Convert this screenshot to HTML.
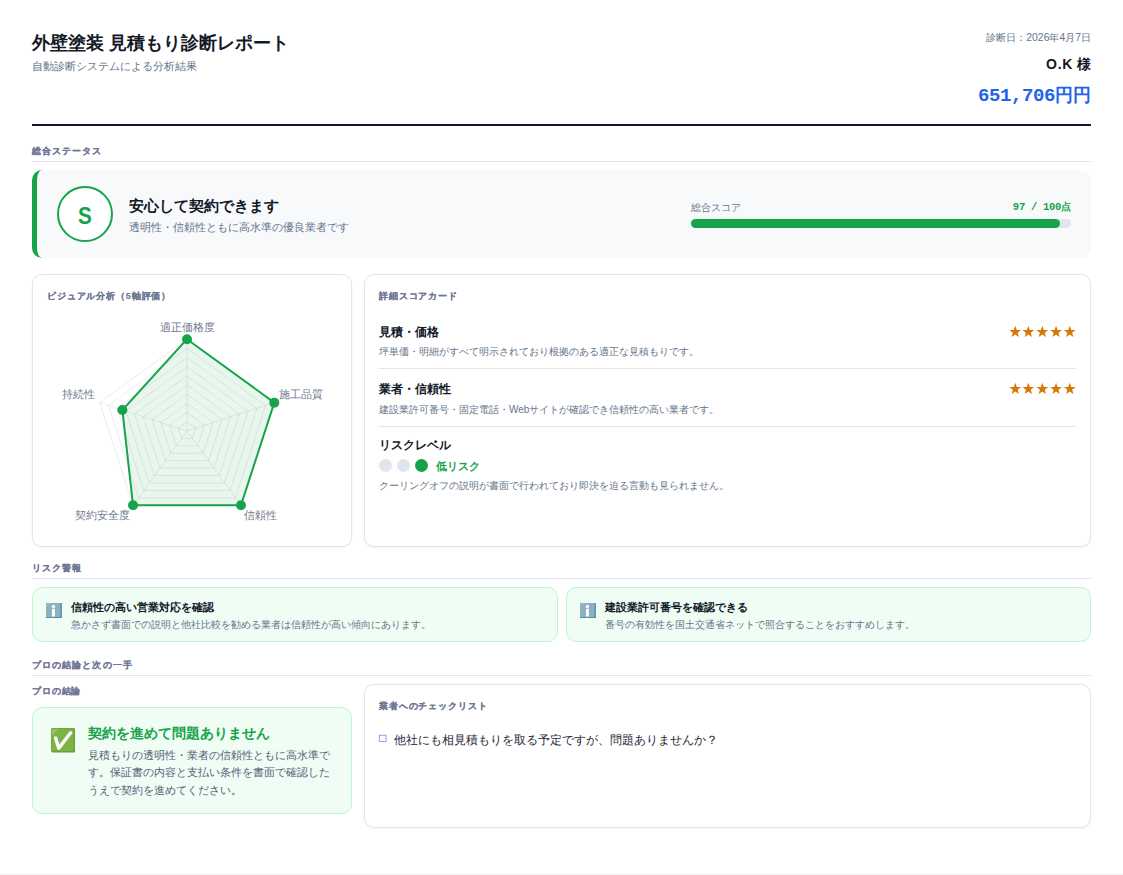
<!DOCTYPE html>
<html lang="ja">
<head>
<meta charset="utf-8">
<title>外壁塗装 見積もり診断レポート</title>
<style>
*{box-sizing:border-box;margin:0;padding:0}
html,body{width:1123px;height:875px;overflow:hidden}
body{font-family:"Liberation Sans",sans-serif;background:#f2f4f7;color:#111827;line-height:1.6;position:relative}
.mono{font-family:"Liberation Mono",monospace}
.page{position:absolute;left:0;top:0;width:1123px;height:873.5px;background:#fff}
.abs{position:absolute;white-space:nowrap}

/* header */
.h1{left:32px;top:29px;font-size:18px;font-weight:700;line-height:29px;color:#111827}
.h-sub{left:32px;top:57px;font-size:11px;line-height:18px;color:#64748b}
.h-date{right:32px;top:30px;font-size:10.4px;line-height:16px;color:#64748b}
.h-name{right:32px;top:53px;font-size:14px;font-weight:700;line-height:22px;color:#111827}
.h-price{right:32px;top:81.7px;font-size:18px;font-weight:700;line-height:29px;color:#2563eb}
.h-price span{font-size:19px;letter-spacing:-.4px}
.h-name span{letter-spacing:.7px}
.h-rule{left:32px;top:124px;width:1059px;height:2px;background:#111827}

/* section titles */
.sec{left:32px;width:1059px;height:18px;font-size:9px;font-weight:700;letter-spacing:.12em;line-height:14px;color:#6f7794;-webkit-text-stroke:.12px #6f7794;border-bottom:1px solid #e2e5ee}
.ctitle{font-size:9px;font-weight:700;letter-spacing:.095em;line-height:14px;color:#6f7794;-webkit-text-stroke:.12px #6f7794}

/* status */
.status{left:32px;top:170px;width:1059px;height:88px;background:#f8f9fb;border-left:5px solid #16a34a;border-radius:10px}
.grade{left:57px;top:186px;width:56px;height:56px;border:2px solid #16a34a;border-radius:50%;background:#fff;color:#16a34a;font-size:24px;font-weight:700;line-height:52px;text-align:center}
.grade span{display:inline-block;transform:translateY(2px) scaleX(.86)}
.st-h{left:129px;top:194px;font-size:15px;font-weight:700;line-height:24px;color:#111827}
.st-s{left:129px;top:217.5px;font-size:11px;line-height:18px;color:#64748b}
.sc-l{left:691px;top:200px;font-size:10px;line-height:16px;color:#64748b}
.sc-v{right:52px;top:199.2px;font-size:10px;font-weight:700;line-height:16px;color:#16a34a}
.bar{left:691px;top:219px;width:380px;height:9px;border-radius:4.5px;background:#e2e5ee}
.bar i{display:block;width:97%;height:100%;border-radius:4.5px;background:#16a34a}

/* cards */
.card{position:absolute;background:#fff;border:1px solid #e2e5ee;border-radius:10px;box-shadow:0 1px 3px rgba(15,23,42,.05)}
.c1{left:32px;top:274px;width:320px;height:273px}
.c2{left:364px;top:274px;width:727px;height:273px}
.row-t{left:379px;font-size:12px;font-weight:700;line-height:20px;color:#111827}
.row-d{left:379px;font-size:10px;line-height:16px;color:#64748b}
.div{left:379px;width:697px;height:1px;background:#e2e5ee}
.dot{width:13px;height:13px;border-radius:50%;background:#e2e5ee}
.dot.on{background:#16a34a}
.risk{left:436px;top:457px;font-size:11px;font-weight:700;line-height:18px;color:#16a34a}

/* alerts */
.alert{position:absolute;top:587.2px;width:525.5px;height:54.7px;background:#f0fdf4;border:1px solid #bbf7d0;border-radius:10px}
.a-t{font-size:11px;font-weight:700;line-height:18px;color:#111827}
.a-d{font-size:10px;line-height:16px;color:#64748b}

/* conclusion */
.concl{position:absolute;left:32px;top:707px;width:320px;height:107px;background:#f0fdf4;border:1px solid #bbf7d0;border-radius:10px}
.cc-h{left:88px;top:721.5px;font-size:14px;font-weight:700;line-height:22.4px;color:#16a34a}
.cc-b{left:88px;top:746.5px;font-size:11px;line-height:17.6px;color:#526077}
.c3{left:364px;top:684px;width:727px;height:144px}
.chk{left:394px;top:730.6px;font-size:12px;line-height:19.2px;color:#1f2937}
</style>
</head>
<body>
<div class="page">

<div class="abs h1">外壁塗装 見積もり診断レポート</div>
<div class="abs h-sub">自動診断システムによる分析結果</div>
<div class="abs h-date">診断日：2026年4月7日</div>
<div class="abs h-name"><span>O.K</span> 様</div>
<div class="abs h-price mono"><span>651,706</span>円円</div>
<div class="abs h-rule"></div>

<div class="abs sec" style="top:144px">総合ステータス</div>
<div class="abs status"></div>
<div class="abs grade"><span>S</span></div>
<div class="abs st-h">安心して契約できます</div>
<div class="abs st-s">透明性・信頼性ともに高水準の優良業者です</div>
<div class="abs sc-l">総合スコア</div>
<div class="abs sc-v mono"><span style="font-size:10.6px;letter-spacing:-.34px">97 / 100</span>点</div>
<div class="abs bar"><i></i></div>

<div class="card c1"></div>
<div class="abs ctitle" style="left:47px;top:289px">ビジュアル分析（5軸評価）</div>
<svg class="abs" style="left:32px;top:274px" width="320" height="273" viewBox="32 274 320 273">
  <g id="radar">
  <polygon points="187.00,421.82 195.73,428.16 192.40,438.43 181.60,438.43 178.27,428.16" fill="none" stroke="#000" stroke-opacity=".075" stroke-width="1"/>
  <polygon points="187.00,412.64 204.46,425.33 197.79,445.85 176.21,445.85 169.54,425.33" fill="none" stroke="#000" stroke-opacity=".075" stroke-width="1"/>
  <polygon points="187.00,403.46 213.19,422.49 203.19,453.28 170.81,453.28 160.81,422.49" fill="none" stroke="#000" stroke-opacity=".075" stroke-width="1"/>
  <polygon points="187.00,394.28 221.92,419.65 208.58,460.71 165.42,460.71 152.08,419.65" fill="none" stroke="#000" stroke-opacity=".075" stroke-width="1"/>
  <polygon points="187.00,385.10 230.65,416.82 213.98,468.13 160.02,468.13 143.35,416.82" fill="none" stroke="#000" stroke-opacity=".075" stroke-width="1"/>
  <polygon points="187.00,375.92 239.38,413.98 219.38,475.56 154.62,475.56 134.62,413.98" fill="none" stroke="#000" stroke-opacity=".075" stroke-width="1"/>
  <polygon points="187.00,366.74 248.11,411.14 224.77,482.99 149.23,482.99 125.89,411.14" fill="none" stroke="#000" stroke-opacity=".075" stroke-width="1"/>
  <polygon points="187.00,357.56 256.85,408.31 230.17,490.41 143.83,490.41 117.15,408.31" fill="none" stroke="#000" stroke-opacity=".075" stroke-width="1"/>
  <polygon points="187.00,348.38 265.58,405.47 235.56,497.84 138.44,497.84 108.42,405.47" fill="none" stroke="#000" stroke-opacity=".075" stroke-width="1"/>
  <polygon points="187.00,339.20 274.31,402.63 240.96,505.27 133.04,505.27 99.69,402.63" fill="none" stroke="#000" stroke-opacity=".075" stroke-width="1"/>
  <line x1="187.00" y1="431.00" x2="187.00" y2="339.20" stroke="#000" stroke-opacity=".075" stroke-width="1"/>
  <line x1="187.00" y1="431.00" x2="274.31" y2="402.63" stroke="#000" stroke-opacity=".075" stroke-width="1"/>
  <line x1="187.00" y1="431.00" x2="240.96" y2="505.27" stroke="#000" stroke-opacity=".075" stroke-width="1"/>
  <line x1="187.00" y1="431.00" x2="133.04" y2="505.27" stroke="#000" stroke-opacity=".075" stroke-width="1"/>
  <line x1="187.00" y1="431.00" x2="99.69" y2="402.63" stroke="#000" stroke-opacity=".075" stroke-width="1"/>
  <polygon points="187.00,339.20 274.31,402.63 240.96,505.27 133.04,505.27 122.39,410.01" fill="#16a34a" fill-opacity=".095" stroke="#16a34a" stroke-width="2" stroke-linejoin="miter"/>
  <circle cx="187.00" cy="339.20" r="5" fill="#16a34a"/>
  <circle cx="274.31" cy="402.63" r="5" fill="#16a34a"/>
  <circle cx="240.96" cy="505.27" r="5" fill="#16a34a"/>
  <circle cx="133.04" cy="505.27" r="5" fill="#16a34a"/>
  <circle cx="122.39" cy="410.01" r="5" fill="#16a34a"/>
  <text x="187.2" y="327.2" text-anchor="middle" dominant-baseline="central" font-size="11" fill="#6f788c">適正価格度</text>
  <text x="279.0" y="393.5" text-anchor="start" dominant-baseline="central" font-size="11" fill="#6f788c">施工品質</text>
  <text x="244.2" y="514.6" text-anchor="start" dominant-baseline="central" font-size="11" fill="#6f788c">信頼性</text>
  <text x="129.9" y="514.6" text-anchor="end" dominant-baseline="central" font-size="11" fill="#6f788c">契約安全度</text>
  <text x="95.1" y="393.5" text-anchor="end" dominant-baseline="central" font-size="11" fill="#6f788c">持続性</text>
  </g>
</svg>

<div class="card c2"></div>
<div class="abs ctitle" style="left:379px;top:289px">詳細スコアカード</div>
<div class="abs row-t" style="top:322px">見積・価格</div>
<svg class="abs" style="left:1005px;top:323.9px" width="75" height="16" viewBox="0 0 75 16" fill="#d97706"><polygon points="10.25,1.80 11.74,5.94 16.15,6.08 12.67,8.79 13.89,13.02 10.25,10.54 6.61,13.02 7.83,8.79 4.35,6.08 8.76,5.94"/><polygon points="23.35,1.80 24.84,5.94 29.25,6.08 25.77,8.79 26.99,13.02 23.35,10.54 19.71,13.02 20.93,8.79 17.45,6.08 21.86,5.94"/><polygon points="37.35,1.80 38.84,5.94 43.25,6.08 39.77,8.79 40.99,13.02 37.35,10.54 33.71,13.02 34.93,8.79 31.45,6.08 35.86,5.94"/><polygon points="51.05,1.80 52.54,5.94 56.95,6.08 53.47,8.79 54.69,13.02 51.05,10.54 47.41,13.02 48.63,8.79 45.15,6.08 49.56,5.94"/><polygon points="64.75,1.80 66.24,5.94 70.65,6.08 67.17,8.79 68.39,13.02 64.75,10.54 61.11,13.02 62.33,8.79 58.85,6.08 63.26,5.94"/></svg>
<div class="abs row-d" style="top:344px">坪単価・明細がすべて明示されており根拠のある適正な見積もりです。</div>
<div class="abs div" style="top:368px"></div>
<div class="abs row-t" style="top:379px">業者・信頼性</div>
<svg class="abs" style="left:1005px;top:380.7px" width="75" height="16" viewBox="0 0 75 16" fill="#d97706"><polygon points="10.25,1.80 11.74,5.94 16.15,6.08 12.67,8.79 13.89,13.02 10.25,10.54 6.61,13.02 7.83,8.79 4.35,6.08 8.76,5.94"/><polygon points="23.35,1.80 24.84,5.94 29.25,6.08 25.77,8.79 26.99,13.02 23.35,10.54 19.71,13.02 20.93,8.79 17.45,6.08 21.86,5.94"/><polygon points="37.35,1.80 38.84,5.94 43.25,6.08 39.77,8.79 40.99,13.02 37.35,10.54 33.71,13.02 34.93,8.79 31.45,6.08 35.86,5.94"/><polygon points="51.05,1.80 52.54,5.94 56.95,6.08 53.47,8.79 54.69,13.02 51.05,10.54 47.41,13.02 48.63,8.79 45.15,6.08 49.56,5.94"/><polygon points="64.75,1.80 66.24,5.94 70.65,6.08 67.17,8.79 68.39,13.02 64.75,10.54 61.11,13.02 62.33,8.79 58.85,6.08 63.26,5.94"/></svg>
<div class="abs row-d" style="top:401.6px">建設業許可番号・固定電話・Webサイトが確認でき信頼性の高い業者です。</div>
<div class="abs div" style="top:426px"></div>
<div class="abs row-t" style="top:435.4px">リスクレベル</div>
<div class="abs dot" style="left:379.1px;top:459.4px"></div>
<div class="abs dot" style="left:397.1px;top:459.4px"></div>
<div class="abs dot on" style="left:415.1px;top:459.4px"></div>
<div class="abs risk">低リスク</div>
<div class="abs row-d" style="top:478px">クーリングオフの説明が書面で行われており即決を迫る言動も見られません。</div>

<div class="abs sec" style="top:561.3px">リスク警報</div>
<div class="alert" style="left:32px"></div>
<div class="alert" style="left:565.5px"></div>
<svg class="abs" style="left:46.1px;top:602.65px" width="15.8" height="15.6" viewBox="0 0 15.8 15.6">
  <rect x="0" y="0" width="15.8" height="15.6" rx="1.1" fill="#4a7c95"/>
  <rect x="0" y="0" width="15.8" height="14.3" rx="1" fill="#6996ad"/>
  <rect x="0" y="0" width="14.3" height="14.3" rx="1" fill="#8cb0c4"/>
  <path d="M.9 4V2.1Q.9 .9 2.2 .9H3.6" fill="none" stroke="#abcbdb" stroke-width=".7" stroke-linecap="round"/>
  <path d="M5.8 2.7Q5.8 2.2 6.3 2.2H6.9L7.4 1.8L7.9 2.2H8.5Q9 2.2 9 2.7V4.7H5.8Z" fill="#fff"/>
  <rect x="5.95" y="5.7" width="2.95" height="7.9" rx=".3" fill="#fff"/>
</svg>
<svg class="abs" style="left:579.8px;top:602.65px" width="15.8" height="15.6" viewBox="0 0 15.8 15.6">
  <rect x="0" y="0" width="15.8" height="15.6" rx="1.1" fill="#4a7c95"/>
  <rect x="0" y="0" width="15.8" height="14.3" rx="1" fill="#6996ad"/>
  <rect x="0" y="0" width="14.3" height="14.3" rx="1" fill="#8cb0c4"/>
  <path d="M.9 4V2.1Q.9 .9 2.2 .9H3.6" fill="none" stroke="#abcbdb" stroke-width=".7" stroke-linecap="round"/>
  <path d="M5.8 2.7Q5.8 2.2 6.3 2.2H6.9L7.4 1.8L7.9 2.2H8.5Q9 2.2 9 2.7V4.7H5.8Z" fill="#fff"/>
  <rect x="5.95" y="5.7" width="2.95" height="7.9" rx=".3" fill="#fff"/>
</svg>
<div class="abs a-t" style="left:71px;top:597.6px">信頼性の高い営業対応を確認</div>
<div class="abs a-d" style="left:71px;top:617px">急かさず書面での説明と他社比較を勧める業者は信頼性が高い傾向にあります。</div>
<div class="abs a-t" style="left:605.3px;top:597.6px">建設業許可番号を確認できる</div>
<div class="abs a-d" style="left:605.3px;top:617px">番号の有効性を国土交通省ネットで照合することをおすすめします。</div>

<div class="abs sec" style="top:657.6px">プロの結論と次の一手</div>
<div class="abs ctitle" style="left:32px;top:684px">プロの結論</div>
<div class="concl"></div>
<svg class="abs" style="left:50.8px;top:728.2px" width="24.4" height="24.4" viewBox="0 0 24.4 24.4">
  <rect x="0" y="0" width="24.4" height="24.4" rx="1.8" fill="#689f38"/>
  <rect x=".4" y=".4" width="22.3" height="22.7" rx="1.4" fill="#7cb342"/>
  <path d="M1.5 7V3.6Q1.5 1.8 3.4 1.8H7Q3.2 2.6 2.6 5Z" fill="#a3cd76" stroke="#a3cd76" stroke-width=".5" stroke-linejoin="round"/>
  <path d="M4.6 10.1L7.8 20.2L19.7 4.8" fill="none" stroke="#fafafa" stroke-width="3.5" stroke-linecap="round" stroke-linejoin="round"/>
</svg>
<div class="abs cc-h">契約を進めて問題ありません</div>
<div class="abs cc-b">見積もりの透明性・業者の信頼性ともに高水準で<br>す。保証書の内容と支払い条件を書面で確認した<br>うえで契約を進めてください。</div>

<div class="card c3"></div>
<div class="abs ctitle" style="left:379px;top:699px">業者へのチェックリスト</div>
<svg class="abs" style="left:378px;top:734px" width="10" height="9" viewBox="0 0 10 9"><rect x="1.3" y="1.2" width="6.8" height="6.3" fill="none" stroke="#6a86f3" stroke-width=".75"/></svg>
<div class="abs chk">他社にも相見積もりを取る予定ですが、問題ありませんか？</div>

</div>
</body>
</html>
